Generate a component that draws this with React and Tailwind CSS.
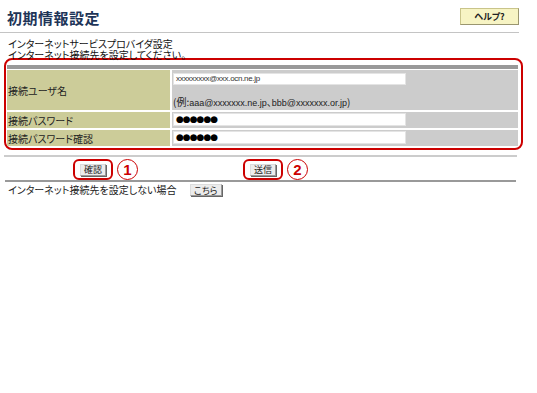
import React from 'react';

const jp = "font-['Noto_Sans_CJK_JP',sans-serif] [font-feature-settings:'palt']";

function SmallButton({ children, className = '' }) {
  return (
    <span
      className={`inline-flex items-center justify-center whitespace-nowrap h-[12px] px-[3px] text-[9px] leading-none text-[#222] bg-[#ececec] border border-[#9a9a9a] border-t-[#dcdcdc] border-l-[#dcdcdc] shadow-[1px_1px_0_#666] ${className}`}
    >
      {children}
    </span>
  );
}

function Marked({ label, num }) {
  return (
    <div className="flex items-center gap-[4px]">
      <div className="w-[40px] h-[21px] rounded-[6px] border-2 border-[#cc0000] flex items-center justify-center">
        <SmallButton>{label}</SmallButton>
      </div>
      <div className="w-[21px] h-[21px] rounded-full border-[1.5px] border-[#cc0000] flex items-center justify-center text-[#cc0000] text-[15px] font-bold leading-none font-['Liberation_Sans',sans-serif]">
        {num}
      </div>
    </div>
  );
}

export default function App() {
  const rows = [
    { label: '接続パスワード' },
    { label: '接続パスワード確認' },
  ];

  return (
    <div className={`w-[537px] h-[393px] bg-white text-[#222] ${jp}`}>
      {/* header */}
      <div className="w-[519px] flex items-start justify-between pl-[7px] pt-[8px]">
        <h1 className="text-[15px] leading-[18px] font-bold text-[#1e3558] tracking-[0.5px] mt-[1px]">初期情報設定</h1>
        <span className="w-[59px] h-[17px] flex items-center justify-center bg-[#f7f4c4] border border-[#c9c48a] border-b-[#9a9670] border-r-[#9a9670] text-[9px] font-bold text-[#222] leading-none">
          ヘルプ?
        </span>
      </div>
      <div className="w-[519px] h-[1px] bg-[#c4c4c4] mt-[5px]"></div>

      <p className="pl-[8px] pt-[5px] text-[10px] leading-[11px] whitespace-pre-line text-[#111]">
        {'インターネットサービスプロバイダ設定\nインターネット接続先を設定してください。'}
      </p>

      {/* form box */}
      <div className="ml-[4px] w-[519px] mt-[-2px] border-2 border-[#cc0000] rounded-[8px] pl-[1px] pr-[3px] pt-[5px] pb-[2px]">
        <div className="h-[4px] bg-[#999999]"></div>
        <div className="mt-[1px] grid grid-cols-[163px_1fr] gap-[2px] text-[10px]">
          <div className="h-[40px] bg-[#cccc99] flex items-center pl-[1px]">接続ユーザ名</div>
          <div className="h-[40px] bg-[#cccccc] pl-[1px] pt-[3px] flex flex-col">
            <div className="w-[233px] h-[12px] bg-white border border-[#e4e4e4] flex items-center pl-[2px] text-[8px] leading-none text-[#333] font-['Liberation_Sans',sans-serif] tracking-[-0.3px]">
              xxxxxxxxx@xxx.ocn.ne.jp
            </div>
            <div className="mt-auto mb-[2px] text-[10px] leading-[10px]">
              (例:<span className="font-['Liberation_Sans',sans-serif] text-[9px]">aaa@xxxxxxx.ne.jp</span>、<span className="font-['Liberation_Sans',sans-serif] text-[9px]">bbb@xxxxxxx.or.jp</span>)
            </div>
          </div>
          {rows.map((r) => (
            <React.Fragment key={r.label}>
              <div className="h-[16px] bg-[#cccc99] flex items-center pl-[1px]">{r.label}</div>
              <div className="h-[16px] bg-[#cccccc] pl-[1px] pt-[1px]">
                <div className="w-[233px] h-[13px] bg-white border border-[#e4e4e4] flex items-center pl-[2px] text-[9px] leading-none text-black font-['DejaVu_Sans',sans-serif] tracking-[-1px]">
                  ●●●●●●
                </div>
              </div>
            </React.Fragment>
          ))}
        </div>
      </div>

      <div className="ml-[4px] w-[513px] h-[2px] bg-[#cccccc] mt-[5px]"></div>

      {/* buttons */}
      <div className="flex items-center pl-[73px] pt-[2px] h-[23px]">
        <Marked label="確認" num="1" />
        <div className="ml-[105px]">
          <Marked label="送信" num="2" />
        </div>
      </div>
      <div className="ml-[5px] w-[511px] h-[2px] bg-[#999999]"></div>

      <div className="flex items-center pl-[8px] pt-[2px] text-[10px] leading-[12px]">
        <span className="w-[182px]">インターネット接続先を設定しない場合</span>
        <SmallButton>こちら</SmallButton>
      </div>
    </div>
  );
}
